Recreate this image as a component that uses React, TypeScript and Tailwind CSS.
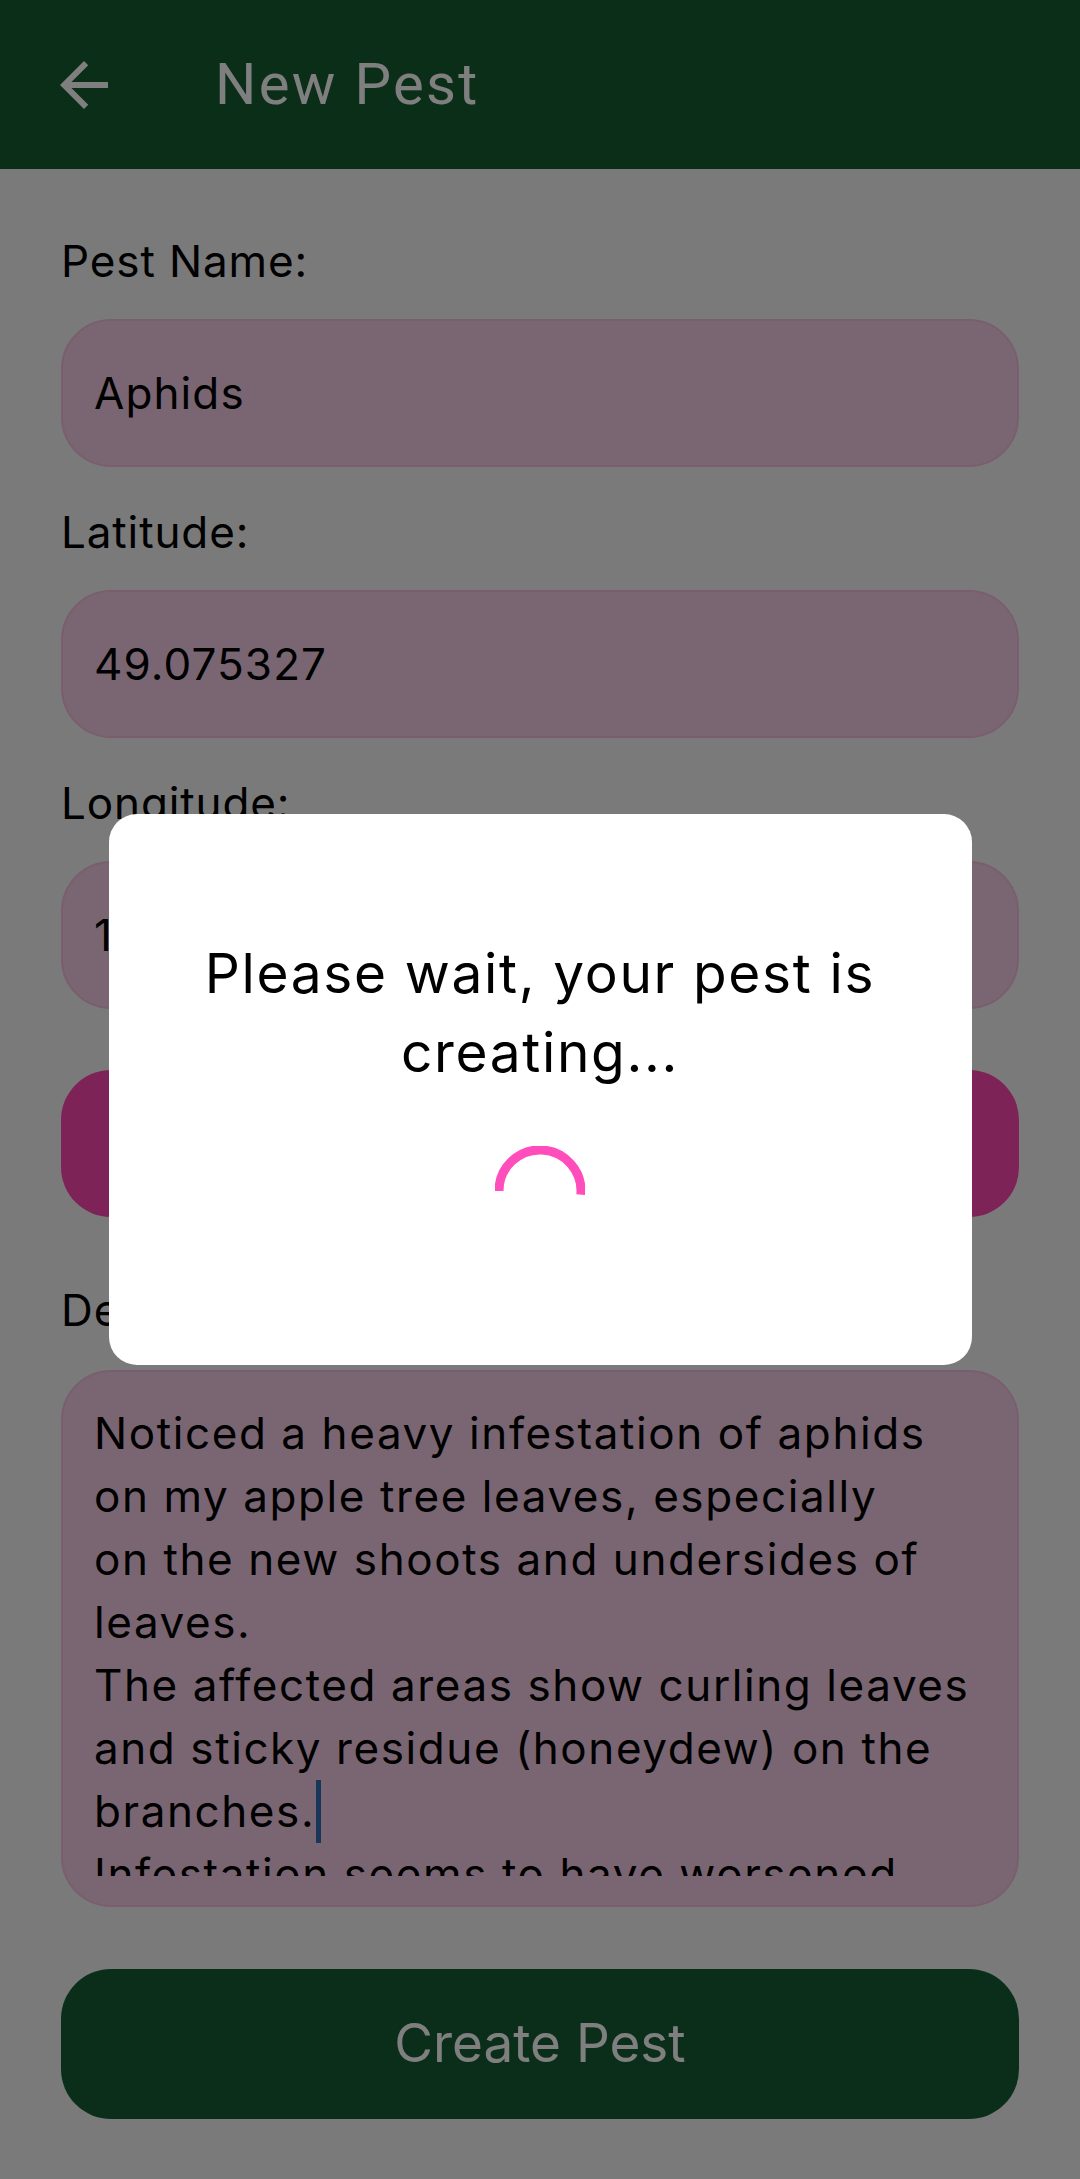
import React from "react";

type FieldProps = {
  label: string;
  value: string;
  first?: boolean;
};

function Field({ label, value, first }: FieldProps) {
  return (
    <div className={first ? "mt-[63px]" : "mt-[36px]"}>
      <label className="block text-[44px] leading-[58px] tracking-[0.02em] text-black">{label}</label>

      <div
        className="
          mt-[29px]
          flex
          h-[148px]
          items-center
          rounded-[50px]
          border-2
          border-[#f2bcdd]
          bg-[#f4cce4]
          px-[31px]
          text-[44px]
          tracking-[0.025em]
          text-black
        "
      >
        {value}
      </div>
    </div>
  );
}

const description = [
  "Noticed a heavy infestation of aphids",
  "on my apple tree leaves, especially",
  "on the new shoots and undersides of",
  "leaves.",
  "The affected areas show curling leaves",
  "and sticky residue (honeydew) on the",
  "branches.",
  "Infestation seems to have worsened",
];

export default function App() {
  return (
    <div className="relative min-h-screen bg-[#f4f4f4] font-['Inter',sans-serif]">
      {/* HEADER */}
      <header className="flex h-[169px] items-center bg-[#145c30]">
        <svg viewBox="0 0 24 24" className="ml-[48px] h-[72px] w-[72px]" fill="#ffffff">
          <path d="M20 11H7.83l5.59-5.59L12 4l-8 8 8 8 1.41-1.41L7.83 13H20v-2z" />
        </svg>

        <h1 className="ml-[95px] font-['Roboto',sans-serif] text-[58px] tracking-[0.04em] text-white">
          New Pest
        </h1>
      </header>

      {/* FORM */}
      <main className="px-[61px] pb-[60px]">
        <Field label="Pest Name:" value="Aphids" first />
        <Field label="Latitude:" value="49.075327" />
        <Field label="Longitude:" value="19.918503" />

        <button
          className="
            mt-[61px]
            flex
            h-[147px]
            w-full
            items-center
            justify-center
            rounded-[50px]
            bg-[#fd46b0]
            text-[50px]
            text-white
          "
        >
          Get Location
        </button>

        <label className="mt-[64px] block text-[44px] leading-[58px] tracking-[0.02em] text-black">
          Description:
        </label>

        <div
          className="
            mt-[31px]
            h-[537px]
            rounded-[50px]
            border-2
            border-[#f2bcdd]
            bg-[#f4cce4]
            px-[31px]
            pt-[30px]
          "
        >
          <div className="h-[474px] overflow-hidden text-[44px] leading-[63px] tracking-[0.036em] text-black">
            {description.map((line, i) => (
              <div key={i} className="flex items-center whitespace-nowrap">
                {line}
                {line === "branches." && <span className="ml-[1px] h-[63px] w-[5px] bg-[#2e6cb4]" />}
              </div>
            ))}
          </div>
        </div>

        <button
          className="
            mt-[62px]
            flex
            h-[150px]
            w-full
            items-center
            justify-center
            rounded-[50px]
            bg-[#145c34]
            text-[53px]
            text-white
          "
        >
          Create Pest
        </button>
      </main>

      {/* LOADING DIALOG */}
      <div className="fixed inset-0 flex items-center justify-center bg-black/50">
        <div className="flex w-[863px] flex-col items-center rounded-[28px] bg-white pb-[129px] pt-[120px]">
          <p className="text-center text-[55px] leading-[79px] tracking-[0.03em] text-black">
            Please wait, your pest is
            <br />
            creating...
          </p>

          <svg viewBox="0 0 90 90" className="mt-[54px] h-[90px] w-[90px]" fill="none">
            <path
              d="M 4 45 A 41 41 0 1 1 85.84 48.57"
              stroke="#ff4dbb"
              strokeWidth="9"
            />
          </svg>
        </div>
      </div>
    </div>
  );
}
